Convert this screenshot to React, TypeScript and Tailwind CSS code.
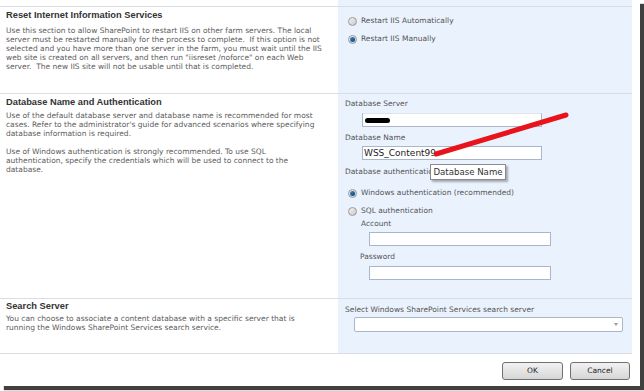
import React from "react";

const font = { fontFamily: '"DejaVu Sans", Verdana, sans-serif' };
const titleFont = { fontFamily: '"Liberation Sans", Arial, sans-serif' };

function Radio({ checked }: { checked?: boolean }) {
  return (
    <span className="relative inline-flex h-[9px] w-[9px] shrink-0 items-center justify-center rounded-full border border-[#9a9a9a] bg-gradient-to-br from-[#f4f4f4] to-[#c8c8c8]">
      {checked && <span className="h-[5px] w-[5px] rounded-full bg-gradient-to-br from-[#3b8fd6] to-[#0b3f78]" />}
    </span>
  );
}

function Input({ className = "", children }: { className?: string; children?: React.ReactNode }) {
  return (
    <div className={"flex h-[14px] items-center border border-[#a9b7c9] bg-white " + className}>{children}</div>
  );
}

function Title({ children }: { children: React.ReactNode }) {
  return (
    <div className="text-[9.3px] font-bold leading-[9px] text-[#333]" style={titleFont}>
      {children}
    </div>
  );
}

export default function App() {
  return (
    <div className="h-[391px] w-[644px] bg-white" style={font}>
      <div className="relative h-[386px] w-[640px] bg-white shadow-[4px_4px_1px_rgba(30,30,30,0.85)]">
        <div className="w-[632px]">
          {/* top spacer */}
          <div className="flex h-[6px]">
            <div className="w-[338px]" />
            <div className="flex-1 bg-[#eaf2fd]" />
          </div>

          {/* Row 1 */}
          <div className="flex h-[87px] border-t border-[#dadde2]">
            <div className="w-[338px] pl-[6px] pt-[4px]">
              <Title>Reset Internet Information Services</Title>
              <p className="mt-[6px] w-[326px] text-[7.5px] leading-[9px] text-[#5c5c5c]">
                Use this section to allow SharePoint to restart IIS on other farm servers. The local server must be restarted manually for the process to complete.&nbsp; If this option is not selected and you have more than one server in the farm, you must wait until the IIS web site is created on all servers, and then run "iisreset /noforce" on each Web server.&nbsp; The new IIS site will not be usable until that is completed.
              </p>
            </div>
            <div className="flex-1 bg-[#eaf2fd] pl-[10px] pt-[9px] text-[7.5px] text-[#555]">
              <div className="flex h-[10px] items-center gap-[4px]">
                <Radio />
                <span>Restart IIS Automatically</span>
              </div>
              <div className="mt-[8px] flex h-[10px] items-center gap-[4px]">
                <Radio checked />
                <span>Restart IIS Manually</span>
              </div>
            </div>
          </div>

          {/* Row 2 */}
          <div className="flex h-[205px] border-t border-[#dadde2]">
            <div className="w-[338px] pl-[6px] pt-[4px]">
              <Title>Database Name and Authentication</Title>
              <p className="mt-[4px] w-[322px] text-[7.5px] leading-[9px] text-[#5c5c5c]">
                Use of the default database server and database name is recommended for most cases. Refer to the administrator's guide for advanced scenarios where specifying database information is required.
              </p>
              <p className="mt-[9px] w-[300px] text-[7.5px] leading-[9px] text-[#5c5c5c]">
                Use of Windows authentication is strongly recommended. To use SQL authentication, specify the credentials which will be used to connect to the database.
              </p>
            </div>
            <div className="relative flex-1 bg-[#eaf2fd] pl-[7px] pt-[5px] text-[7.5px] text-[#555]">
              <div className="h-[10px] leading-[10px]">Database Server</div>
              <Input className="ml-[17px] mt-[4px] w-[180px] border-t-[#dfe5ec]">
                <div className="ml-[2px] h-[5px] w-[25px] rounded-full bg-black" />
              </Input>
              <div className="mt-[6px] h-[10px] leading-[10px]">Database Name</div>
              <Input className="ml-[17px] mt-[3px] w-[180px]">
                <span className="pl-[1px] leading-[12px] text-[#222]" style={{ fontSize: "9px" }}>
                  WSS_Content99
                </span>
              </Input>
              <div className="mt-[7px] h-[10px] leading-[10px]">Database authentication</div>
              <div className="ml-[3px] mt-[11px] flex h-[10px] items-center gap-[4px]">
                <Radio checked />
                <span>Windows authentication (recommended)</span>
              </div>
              <div className="ml-[3px] mt-[8px] flex h-[10px] items-center gap-[4px]">
                <Radio />
                <span>SQL authentication</span>
              </div>
              <div className="ml-[16px] mt-[3px] h-[10px] leading-[10px]">Account</div>
              <Input className="ml-[24px] mt-[3px] w-[182px]" />
              <div className="ml-[15px] mt-[6px] h-[10px] leading-[10px]">Password</div>
              <Input className="ml-[24px] mt-[4px] w-[182px]" />

              {/* tooltip */}
              <div
                className="absolute left-[92px] top-[70px] flex h-[16px] w-[76px] items-center justify-center border border-[#8a8a8a] bg-white text-[#333] shadow-[2px_2px_2px_rgba(0,0,0,0.3)]"
                style={{ fontSize: "8.6px" }}
              >
                Database Name
              </div>
              {/* red stroke */}
              <svg className="absolute left-[96px] top-[18px]" width="136" height="46" viewBox="0 0 136 46">
                <line x1="2" y1="42" x2="132" y2="3" stroke="#e8131b" strokeWidth="5" strokeLinecap="round" />
              </svg>
            </div>
          </div>

          {/* Row 3 */}
          <div className="flex h-[56px] border-y border-[#dadde2]">
            <div className="w-[338px] pl-[6px] pt-[3px]">
              <Title>Search Server</Title>
              <p className="mt-[3px] w-[300px] text-[7.5px] leading-[9px] text-[#5c5c5c]">
                You can choose to associate a content database with a specific server that is running the Windows SharePoint Services search service.
              </p>
            </div>
            <div className="flex-1 bg-[#eaf2fd] pl-[7px] pt-[6px] text-[7.5px] text-[#555]">
              <div className="h-[10px] leading-[10px]">Select Windows SharePoint Services search server</div>
              <div className="ml-[9px] mt-[2px] flex h-[15px] w-[269px] items-center justify-end rounded-[2px] border border-[#a9b7c9] bg-white pr-[4px]">
                <span className="h-0 w-0 border-x-[2.5px] border-t-[3px] border-x-transparent border-t-[#9a9a9a]" />
              </div>
            </div>
          </div>

          {/* Buttons */}
          <div className="flex justify-end gap-[7px] pr-[2px] pt-[8px]">
            <button className="flex h-[18px] w-[61px] items-center justify-center rounded-[3px] border border-[#707070] bg-gradient-to-b from-[#f2f2f2] to-[#d6d6d6] text-[7.5px] text-[#222]">
              OK
            </button>
            <button className="flex h-[18px] w-[60px] items-center justify-center rounded-[3px] border border-[#707070] bg-gradient-to-b from-[#f2f2f2] to-[#d6d6d6] text-[7.5px] text-[#222]">
              Cancel
            </button>
          </div>
        </div>
      </div>
    </div>
  );
}
